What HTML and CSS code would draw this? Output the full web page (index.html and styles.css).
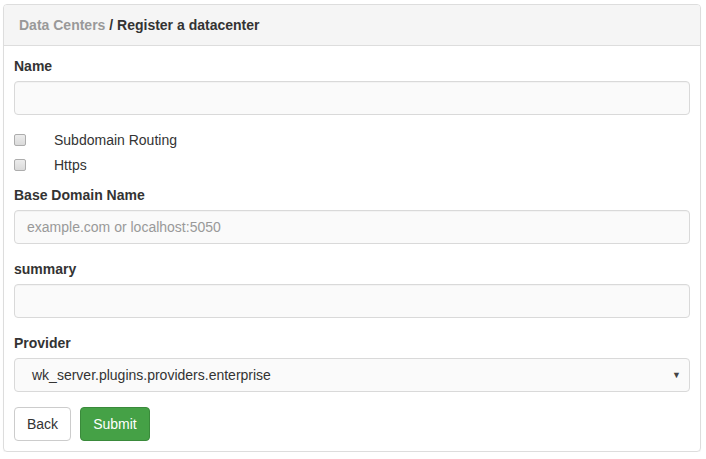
FILE: index.html
```html
<!DOCTYPE html>
<html>
<head>
<meta charset="utf-8">
<link rel="stylesheet" href="styles.css">
</head>
<body>
<div class="panel">
  <div class="panel-heading">
    <span class="crumb-link">Data Centers</span> / Register a datacenter
  </div>
  <form class="panel-body">
    <div class="form-group">
      <label class="field-label">Name</label>
      <input class="form-control" type="text">
    </div>
    <div class="checkbox"><label><input type="checkbox"><span>Subdomain Routing</span></label></div>
    <div class="checkbox"><label><input type="checkbox"><span>Https</span></label></div>
    <div class="form-group">
      <label class="field-label">Base Domain Name</label>
      <input class="form-control" type="text" placeholder="example.com or localhost:5050">
    </div>
    <div class="form-group">
      <label class="field-label">summary</label>
      <input class="form-control" type="text">
    </div>
    <div class="form-group">
      <label class="field-label">Provider</label>
      <div class="select">
        <span>wk_server.plugins.providers.enterprise</span>
        <span class="caret">&#9660;</span>
      </div>
    </div>
    <div class="actions">
      <button type="button" class="btn btn-default">Back</button>
      <button type="button" class="btn btn-success">Submit</button>
    </div>
  </form>
</div>
</body>
</html>
```

FILE: styles.css
```css
* { box-sizing: border-box; }
html, body { margin: 0; padding: 0; background: #fff; }
body {
  font-family: "Liberation Sans", Arial, sans-serif;
  font-size: 14px;
  line-height: 20px;
  color: #333;
  padding: 4px 5px 0 3px;
}
.panel {
  border: 1px solid #ddd;
  border-radius: 4px;
  box-shadow: 0 1px 1px rgba(0,0,0,0.05);
}
.panel-heading {
  background: #f5f5f5;
  border-bottom: 1px solid #ddd;
  border-radius: 3px 3px 0 0;
  padding: 10px 15px;
  font-weight: bold;
  color: #333;
}
.crumb-link { color: #999; }
.panel-body {
  display: block;
  margin: 0;
  padding: 10px;
}
.form-group { margin-bottom: 15px; }
.field-label {
  display: inline-block;
  font-weight: bold;
  margin-bottom: 5px;
}
.form-control {
  display: block;
  width: 100%;
  height: 34px;
  padding: 6px 12px;
  font-family: inherit;
  font-size: 14px;
  color: #555;
  background: #fafafa;
  border: 1px solid #d9d9d9;
  border-radius: 4px;
  box-shadow: inset 0 1px 1px rgba(0,0,0,0.03);
  outline: none;
}
.form-control::placeholder { color: #999; }
.checkbox { margin: 10px 0; }
.checkbox + .checkbox { margin-top: -5px; }
.checkbox label {
  display: flex;
  align-items: center;
  height: 20px;
}
.checkbox input {
  appearance: none;
  -webkit-appearance: none;
  width: 12px;
  height: 12px;
  margin: 0 28px 0 0;
  border: 1px solid #adadad;
  border-radius: 2px;
  background: linear-gradient(#ececec, #dadada);
}
.select {
  display: flex;
  align-items: center;
  justify-content: space-between;
  height: 34px;
  padding: 0 8px 0 17px;
  color: #333;
  background: #fafafa;
  border: 1px solid #d9d9d9;
  border-radius: 4px;
}
.caret { font-size: 9px; color: #444; }
.actions { display: flex; gap: 9px; }
.btn {
  height: 34px;
  padding: 6px 12px;
  font-family: inherit;
  font-size: 14px;
  line-height: 20px;
  border: 1px solid transparent;
  border-radius: 4px;
}
.btn-default { background: #fff; color: #333; border-color: #ccc; }
.btn-success { background: #45a146; color: #fff; border-color: #3a8a3b; }
```
